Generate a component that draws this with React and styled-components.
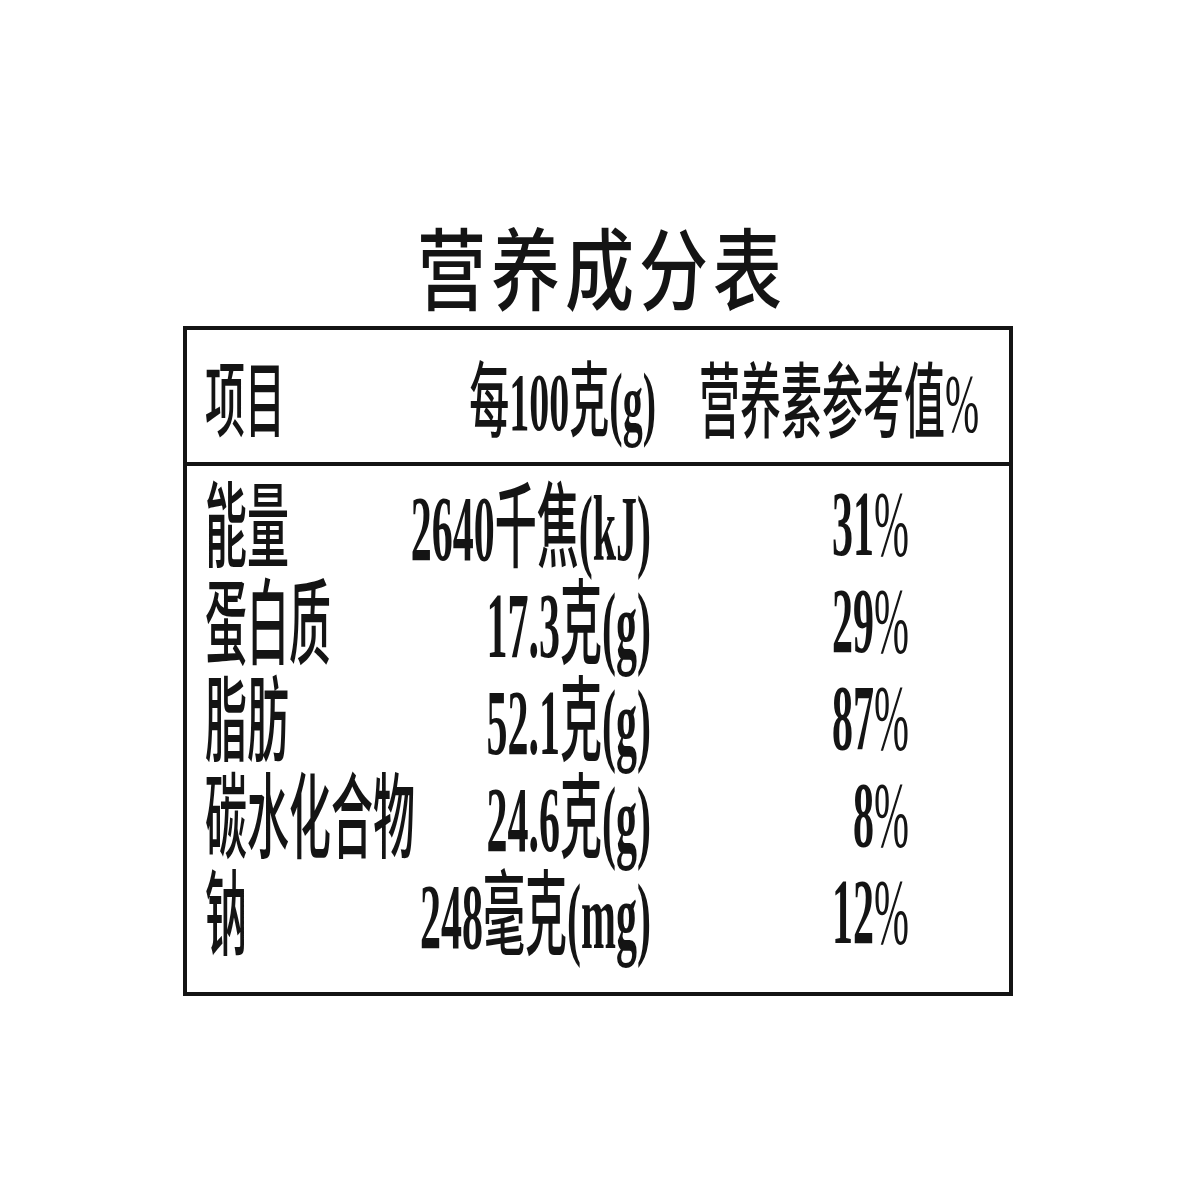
import React from 'react';
import styled, { createGlobalStyle } from 'styled-components';

const Global = createGlobalStyle`
html, body {
  margin: 0;
  padding: 0;
  background: #fff;
}
body {
  font-family: "Liberation Serif", "Noto Sans CJK SC", serif;
  color: #141414;
}
`

const Page = styled.div`
width: 1200px;
height: 1200px;
padding-top: 215px;
box-sizing: border-box;
`

const Sheet = styled.div`
width: 830px;
margin-left: 183px;
`

const Title = styled.h1`
margin: 0 0 11px 8px;
height: 100px;
display: flex;
justify-content: center;
align-items: center;
font-family: "Noto Sans CJK SC", sans-serif;
font-weight: 500;
font-size: 69px;
line-height: 1;
letter-spacing: 5px;
`

// glyphs on the label are tall and narrow: set the width by font-size, stretch up
const Tall = styled.span`
display: inline-block;
flex-shrink: 0;
white-space: nowrap;
line-height: 1;
font-weight: 700;
transform: scaleY(${p => p.$scale});
transform-origin: center center;
`

const Table = styled.div`
border: 4px solid #141414;
box-sizing: border-box;
`

const Header = styled.div`
display: grid;
grid-template-columns: 240px 211px 253px;
height: 136px;
padding-left: 18px;
padding-top: 6px;
align-items: center;
border-bottom: 4px solid #141414;
font-size: 40px;
box-sizing: border-box;
`

const Body = styled.div`
padding: 9px 0 32px 18px;
font-size: 42px;
`

const Row = styled.div`
display: grid;
grid-template-columns: 240px 206px 258px;
height: 97px;
align-items: center;
`

const Cell = styled.div`
display: flex;
justify-content: ${p => (p.$align === 'right' ? 'flex-end' : 'flex-start')};
padding-left: ${p => p.$indent || 0}px;
font-size: ${p => (p.$size ? `${p.$size}px` : 'inherit')};
`

const Cjk = styled.span`
font-family: "Noto Sans CJK SC", sans-serif;
font-weight: 500;
`

const Pct = styled.span`
font-weight: 400;
`

const rows = [
  { name: '能量', amount: '2640', unit: '千焦', sym: '(kJ)', nrv: '31' },
  { name: '蛋白质', amount: '17.3', unit: '克', sym: '(g)', nrv: '29' },
  { name: '脂肪', amount: '52.1', unit: '克', sym: '(g)', nrv: '87' },
  { name: '碳水化合物', amount: '24.6', unit: '克', sym: '(g)', nrv: '8' },
  { name: '钠', amount: '248', unit: '毫克', sym: '(mg)', nrv: '12' },
]

const S = 2.22

export default function App() {
  return (
    <Page>
      <Global />
      <Sheet>
        <Title>
          <Tall $scale={1.28}><Cjk>营养成分表</Cjk></Tall>
        </Title>
        <Table>
          <Header>
            <Cell>
              <Tall $scale={2.04}><Cjk>项目</Cjk></Tall>
            </Cell>
            <Cell $align="right">
              <Tall $scale={2.04}><Cjk>每</Cjk>100<Cjk>克</Cjk>(g)</Tall>
            </Cell>
            <Cell $indent={43} $size={41}>
              <Tall $scale={2.0}><Cjk>营养素参考值</Cjk><Pct>%</Pct></Tall>
            </Cell>
          </Header>
          <Body>
            {rows.map(r => (
              <Row key={r.name}>
                <Cell>
                  <Tall $scale={S}><Cjk>{r.name}</Cjk></Tall>
                </Cell>
                <Cell $align="right">
                  <Tall $scale={S}>
                    {r.amount}<Cjk>{r.unit}</Cjk>{r.sym}
                  </Tall>
                </Cell>
                <Cell $align="right">
                  <Tall $scale={S}>{r.nrv}<Pct>%</Pct></Tall>
                </Cell>
              </Row>
            ))}
          </Body>
        </Table>
      </Sheet>
    </Page>
  )
}
